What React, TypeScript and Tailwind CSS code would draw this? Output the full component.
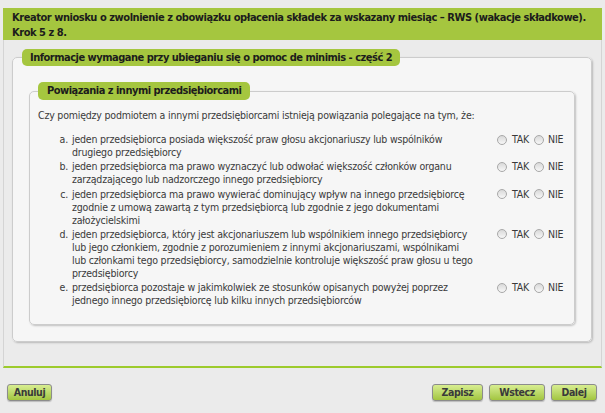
const items: { m: string; t: string[] }[] = [
  { m: "a.", t: ["jeden przedsiębiorca posiada większość praw głosu akcjonariuszy lub wspólników", "drugiego przedsiębiorcy"] },
  { m: "b.", t: ["jeden przedsiębiorca ma prawo wyznaczyć lub odwołać większość członków organu", "zarządzającego lub nadzorczego innego przedsiębiorcy"] },
  { m: "c.", t: ["jeden przedsiębiorca ma prawo wywierać dominujący wpływ na innego przedsiębiorcę", "zgodnie z umową zawartą z tym przedsiębiorcą lub zgodnie z jego dokumentami", "założycielskimi"] },
  { m: "d.", t: ["jeden przedsiębiorca, który jest akcjonariuszem lub wspólnikiem innego przedsiębiorcy", "lub jego członkiem, zgodnie z porozumieniem z innymi akcjonariuszami, wspólnikami", "lub członkami tego przedsiębiorcy, samodzielnie kontroluje większość praw głosu u tego", "przedsiębiorcy"] },
  { m: "e.", t: ["przedsiębiorca pozostaje w jakimkolwiek ze stosunków opisanych powyżej poprzez", "jednego innego przedsiębiorcę lub kilku innych przedsiębiorców"] },
];

function Radio() {
  return (
    <span className="inline-block h-[10px] w-[10px] flex-none rounded-full border border-[#a8a8a8] bg-gradient-to-b from-[#d9d9d9] to-[#f7f7f7]" />
  );
}

function Btn({ label, w }: { label: string; w: string }) {
  return (
    <button
      className={`${w} h-[17px] rounded-[3px] border border-[#8c8c8c] bg-gradient-to-b from-[#d8ee90] to-[#a2c53e] text-[10.5px] font-bold leading-[15px] tracking-[-0.4px] text-[#3a3a3a] shadow-[0_1px_1px_rgba(0,0,0,0.2)]`}
    >
      {label}
    </button>
  );
}

export default function App() {
  return (
    <div
      className="h-[413px] w-[605px] overflow-hidden bg-[#ebebeb] px-[3px] pt-[8px] text-[#333]"
      style={{ fontFamily: "'DejaVu Sans Condensed', 'DejaVu Sans', sans-serif" }}
    >
      <div className="h-[32px] bg-[#a5c63f] pl-[9px] pt-[2px] text-[11px] font-bold leading-[15px] tracking-[-0.45px] text-[#1c1c1c]">
        <div>Kreator wniosku o zwolnienie z obowiązku opłacenia składek za wskazany miesiąc – RWS (wakacje składkowe).</div>
        <div>Krok 5 z 8.</div>
      </div>
      <div className="h-[328px] border-x border-b-2 border-x-[#d4d4d4] border-b-[#9dcb2d] bg-[#ebebeb] pl-[8px] pr-[9px] pt-[9px]">
        <fieldset className="rounded-[5px] border border-[#cccccc] bg-[#f6f6f6] px-[9px] pb-[16px] pt-[16px] shadow-[1px_1px_2px_rgba(0,0,0,0.22)]">
          <legend className="rounded-[5px] bg-[#a5c63f] px-[8px] text-[11px] font-bold leading-[17px] tracking-[-0.5px] text-[#1c1c1c]">
            Informacje wymagane przy ubieganiu się o pomoc de minimis - część 2
          </legend>
          <fieldset className="mx-[7px] rounded-[5px] border border-[#cccccc] bg-[#f6f6f6] px-[8px] pb-[17px] pt-[9px] shadow-[1px_1px_2px_rgba(0,0,0,0.22)]">
            <legend className="rounded-[5px] bg-[#a5c63f] px-[9px] text-[11px] font-bold leading-[18px] tracking-[-0.5px] text-[#1c1c1c]">
              Powiązania z innymi przedsiębiorcami
            </legend>
            <div className="text-[10.5px] leading-[13px] tracking-[-0.2px] text-[#3a3a3a]">
              <div>Czy pomiędzy podmiotem a innymi przedsiębiorcami istnieją powiązania polegające na tym, że:</div>
              <div className="mt-[11px] flex flex-col gap-[1.25px]">
                {items.map((it) => (
                  <div key={it.m} className="flex items-start">
                    <div className="ml-[18px] w-[12px] flex-none text-right">{it.m}</div>
                    <div className="ml-[4px] w-[410px] flex-none">
                      {it.t.map((line) => (
                        <div key={line} className="whitespace-nowrap">{line}</div>
                      ))}
                    </div>
                    <div className="ml-[15px] flex h-[13px] flex-none items-center">
                      <Radio />
                      <span className="ml-[5px]">TAK</span>
                      <span className="ml-[5px] flex items-center">
                        <Radio />
                      </span>
                      <span className="ml-[4px]">NIE</span>
                    </div>
                  </div>
                ))}
              </div>
            </div>
          </fieldset>
        </fieldset>
      </div>
      <div className="mt-[16px] flex items-center pl-[4px] pr-[5px]">
        <Btn label="Anuluj" w="w-[45px]" />
        <div className="ml-auto flex gap-[6px]">
          <Btn label="Zapisz" w="w-[51px]" />
          <Btn label="Wstecz" w="w-[56px]" />
          <Btn label="Dalej" w="w-[46px]" />
        </div>
      </div>
    </div>
  );
}
